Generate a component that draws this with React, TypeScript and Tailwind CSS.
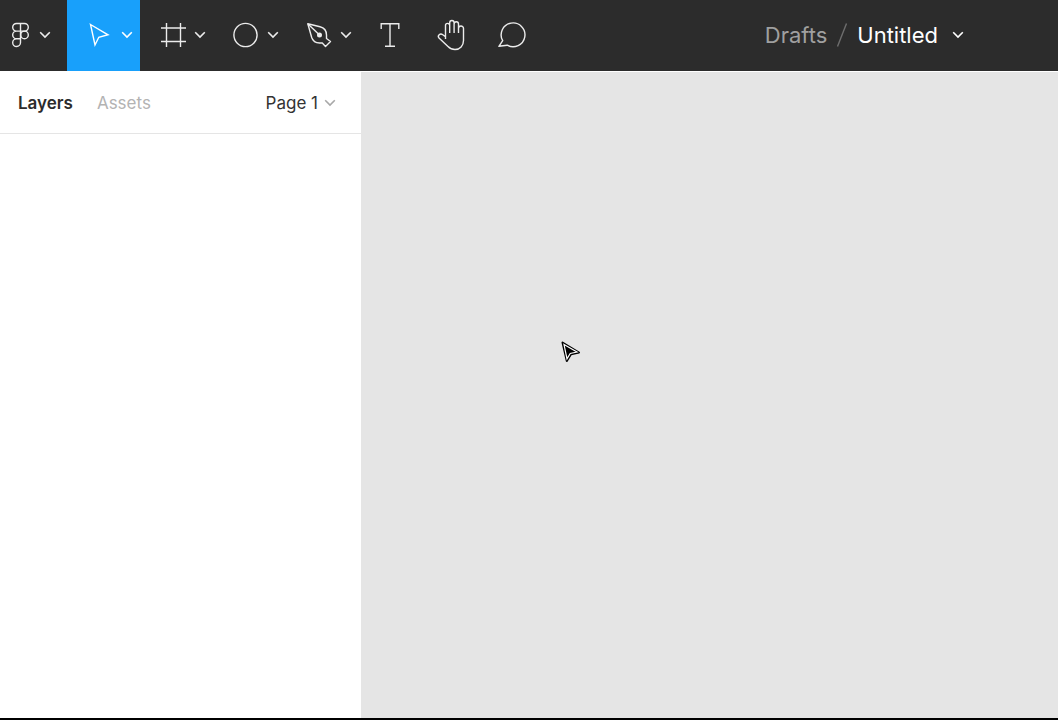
import type { ReactNode } from 'react';

const Chevron = ({ className = '' }: { className?: string }) => (
    <svg className={`w-3 h-3 shrink-0 ${className}`} viewBox="0 0 12 12" fill="none" stroke="currentColor" strokeWidth={1.6} aria-hidden="true">
        <path d="M1.2 3.2L6 8l4.8-4.8" />
    </svg>
);

const Icon = ({ children }: { children: ReactNode }) => (
    <svg className="w-8 h-8 shrink-0" viewBox="0 0 32 32" fill="none" stroke="currentColor" strokeWidth={1.4} aria-hidden="true">
        {children}
    </svg>
);

const dropdownTools = [
    {
        label: 'Move',
        active: true,
        icon: <path d="M7.5 5.5l17.5 10.3-9.2 2.5-3.8 7.7z" />,
    },
    {
        label: 'Frame',
        active: false,
        icon: <path d="M10.5 4v24M24.500 4v24M5 9h25M5 22.500h25" />,
    },
    {
        label: 'Ellipse',
        active: false,
        icon: <circle cx="16.5" cy="16" r="11.6" />,
    },
    {
        label: 'Pen',
        active: false,
        icon: (
            <>
                <path d="M5.8 4.7l12.2 3c4 1 6.5 4.3 6.5 8.3v3.5l4 3-5 5-3.2-3.5h-2.8c-3.5 0-6.5-1.500-7.800-5.500z" strokeLinejoin="round" />
                <path d="M6 5l10.500 10" />
                <circle cx="17.5" cy="16" r="1.8" fill="currentColor" />
            </>
        ),
    },
];

const simpleTools = [
    {
        label: 'Text',
        icon: <path d="M7.2 10V4.700h17.600V10M16 4.700v22.600M11 27.300h10" />,
    },
    {
        label: 'Hand',
        icon: (
            <path
                d="M10.500 20V6.500a2.100 2.100 0 0 1 4.200 0V14M14.700 14V3.700a2.200 2.200 0 0 1 4.400 0V14M19.100 5a2.200 2.200 0 0 1 4.400 0v9M23.500 9.500a2.500 2.500 0 0 1 5 0V21.500c0 5.200-3.500 9-8.500 9-3 0-5-1-7-3L4 19c-2-2.500 1.200-5.200 3.800-3.300L10.500 17.800"
                strokeLinejoin="round"
            />
        ),
    },
    {
        label: 'Comment',
        icon: <path d="M2.900 27.300l3.800-5.600a11.900 11.900 0 1 1 4.500 4.500z" strokeLinejoin="round" />,
    },
];

export default function App() {
    return (
        <div className="min-h-screen flex flex-col bg-[#e5e5e5] border-b-2 border-black font-['Inter',sans-serif]">
            {/* Toolbar */}
            <header className="h-[72px] shrink-0 flex items-stretch bg-[#2c2c2c] text-[#ececec] border-b border-white">
                <button type="button" aria-label="Main menu" className="w-[67px] shrink-0 flex items-center gap-2 pl-[11px] pb-px">
                    <svg className="w-5 h-[26px] shrink-0" viewBox="0 0 20 26" fill="none" stroke="currentColor" strokeWidth={1.4} aria-hidden="true">
                        <path d="M9.500 1.500h-4a3.800 3.800 0 0 0 0 7.600h4zM9.500 1.500h4a3.800 3.800 0 0 1 0 7.600h-4zM9.500 9.100h-4a3.800 3.800 0 0 0 0 7.600h4zM9.500 16.700h-4a3.900 3.900 0 1 0 4 3.900z" />
                        <circle cx="13.500" cy="12.900" r="3.800" />
                    </svg>
                    <Chevron />
                </button>
                {dropdownTools.map((tool) => (
                    <button
                        key={tool.label}
                        type="button"
                        aria-label={tool.label}
                        aria-pressed={tool.active}
                        className={`w-[73px] shrink-0 flex items-center gap-1.5 pl-4 pb-px ${tool.active ? 'bg-[#18a0fb] text-white' : ''}`}
                    >
                        <Icon>{tool.icon}</Icon>
                        <Chevron />
                    </button>
                ))}
                {simpleTools.map((tool) => (
                    <button key={tool.label} type="button" aria-label={tool.label} className="w-[61px] shrink-0 flex items-center justify-center pb-px">
                        <Icon>{tool.icon}</Icon>
                    </button>
                ))}

                {/* File name */}
                <div className="ml-auto pr-[94px] pb-px flex items-center text-[22px] leading-7 whitespace-nowrap">
                    <a href="#" className="text-[#a0a0a0]">Drafts</a>
                    <svg className="w-3 h-6 mx-[9px] text-[#6e6e6e]" viewBox="0 0 12 24" fill="none" stroke="currentColor" strokeWidth={1.4} aria-hidden="true">
                        <path d="M1.500 23.500l9-23" />
                    </svg>
                    <button type="button" className="flex items-center gap-3.5 text-white">
                        Untitled
                        <Chevron />
                    </button>
                </div>
            </header>

            <div className="flex-1 flex">
                {/* Layers panel */}
                <aside className="w-[361px] shrink-0 bg-white">
                    <div className="h-[62px] flex items-center border-b border-[#e5e5e5] pl-[18px] pr-[25px] text-[17px] leading-6">
                        <button type="button" className="font-semibold text-[#2c2c2c]">Layers</button>
                        <button type="button" className="ml-6 text-[#b3b3b3]">Assets</button>
                        <button type="button" className="ml-auto flex items-center gap-1.5 text-[#333333]">
                            Page 1
                            <Chevron className="text-[#a8a8a8]" />
                        </button>
                    </div>
                </aside>

                {/* Canvas */}
                <main className="relative flex-1">
                    <svg className="absolute left-[200px] top-[269px] w-5 h-[22px]" viewBox="0 0 20 22" aria-hidden="true">
                        <path d="M1.500 1.500l16.500 10-8 1.700-4.200 6.800z" fill="#000" stroke="#000" strokeWidth={2} strokeLinejoin="round" />
                        <path d="M3 3.500l13 7.600-6.800 1.400-3.200 5.300z" fill="#000" stroke="#fff" strokeWidth={1.200} />
                    </svg>
                </main>
            </div>
        </div>
    );
}
